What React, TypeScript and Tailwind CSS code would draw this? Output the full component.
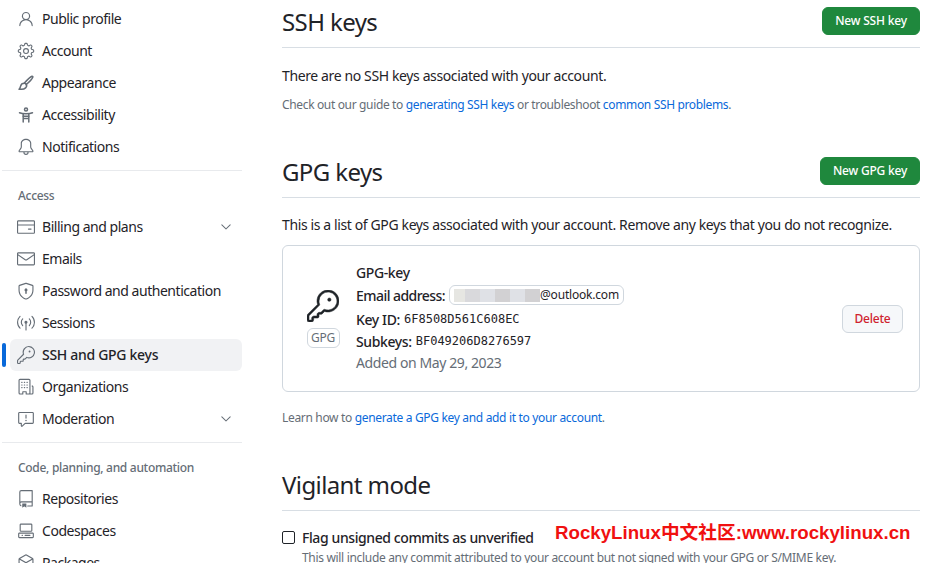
import {
  GoPerson, GoGear, GoBell, GoCreditCard, GoMail,
  GoShieldLock, GoBroadcast, GoKey, GoOrganization, GoReport, GoRepo, GoCodespaces,
  GoPackage, GoChevronDown,
} from "react-icons/go";

const font = "font-['Noto_Sans','Liberation_Sans',sans-serif]";

function BrushIcon({ className }: any) {
  return (
    <svg width={18} height={18} viewBox="-1 -1 18 18" fill="none" stroke="currentColor" strokeWidth="1.5" strokeLinejoin="round" strokeLinecap="round" className={className}>
      <path d="M6.4 8.1C8.6 5.6 12 2 14 1.3c.6-.2 1.1.3.8.9-.8 2-4.4 5.5-6.9 7.6" />
      <path d="M6.3 8.2c1.1 0 2.2.8 2.4 1.7.3 2-1.6 4.4-5 4.4H1c1.2-1 1.3-2 1.6-3.2.4-1.700 2-2.900 3.700-2.900z" />
    </svg>
  );
}

function AccessIcon({ className }: any) {
  return (
    <svg width={18} height={18} viewBox="-1 -1 18 18" fill="none" stroke="currentColor" strokeWidth="1.5" strokeLinecap="round" strokeLinejoin="round" className={className}>
      <circle cx="8" cy="2.500" r="1.500" />
      <path d="M1.500 5.800c2 .9 4.200 1 6.500 1s4.500-.1 6.500-1" />
      <path d="M5.200 6.800v2.400h5.600V6.800" />
      <path d="M5.200 9.200V15M10.800 9.200V15M5.200 11.500h5.600" />
    </svg>
  );
}

function NavItem({ icon: Icon, label, chevron, active }: any) {
  return (
    <div className={`relative flex h-8 items-center rounded-md pl-[7px] pr-2 text-[14px] text-[#1f2328] ${active ? "bg-[#f1f2f4] font-medium tracking-[-0.3px]" : "tracking-[-0.47px]"}`}>
      {active && <span className="absolute -left-2 top-1 h-6 w-1 rounded-md bg-[#0969da]" />}
      <Icon className="mr-[7px] shrink-0 text-[#656d76]" size={18} />
      <span className="flex-1 pb-[2px]">{label}</span>
      {chevron && <GoChevronDown className="text-[#656d76]" size={16} />}
    </div>
  );
}

function Heading({ title, button, width }: any) {
  return (
    <div className="flex h-[48px] items-center justify-between border-b border-[#d8dee4] pb-[5px]">
      <h2 className="mt-px text-[24px] leading-none tracking-[-0.6px] text-[#1f2328]">{title}</h2>
      {button && (
        <button className={`flex h-7 ${width} items-center justify-center rounded-md border border-[#1f883d] bg-[#1f883d] text-[12px] font-medium tracking-[-0.2px] text-white`}>
          {button}
        </button>
      )}
    </div>
  );
}

export default function App() {
  return (
    <div className={`relative flex h-[563px] w-[925px] overflow-hidden bg-white ${font}`}>
      {/* sidebar */}
      <div className="ml-[10px] w-[232px] shrink-0 pt-[3px]">
        <NavItem icon={GoPerson} label="Public profile" />
        <NavItem icon={GoGear} label="Account" />
        <NavItem icon={BrushIcon} label="Appearance" />
        <NavItem icon={AccessIcon} label="Accessibility" />
        <NavItem icon={GoBell} label="Notifications" />
        <div className="-ml-2 mb-[17px] mt-[7px] border-t border-[#e8eaed]" />
        <div className="mb-[7px] h-[16px] pl-2 text-[12px] font-medium leading-[16px] tracking-[-0.3px] text-[#656d76]">Access</div>
        <NavItem icon={GoCreditCard} label="Billing and plans" chevron />
        <NavItem icon={GoMail} label="Emails" />
        <NavItem icon={GoShieldLock} label="Password and authentication" />
        <NavItem icon={GoBroadcast} label="Sessions" />
        <NavItem icon={GoKey} label="SSH and GPG keys" active />
        <NavItem icon={GoOrganization} label="Organizations" />
        <NavItem icon={GoReport} label="Moderation" chevron />
        <div className="-ml-2 mb-[17px] mt-[7px] border-t border-[#e8eaed]" />
        <div className="mb-[7px] h-[16px] pl-2 text-[12px] font-medium leading-[16px] tracking-[-0.3px] text-[#656d76]">Code, planning, and automation</div>
        <NavItem icon={GoRepo} label="Repositories" />
        <NavItem icon={GoCodespaces} label="Codespaces" />
        <NavItem icon={GoPackage} label="Packages" />
      </div>

      {/* main */}
      <div className="ml-[40px] w-[638px] shrink-0 text-[14px] tracking-[-0.38px] text-[#1f2328]">
        <Heading title="SSH keys" button="New SSH key" width="w-[98px]" />
        <p className="mt-[18px] leading-[20px]">There are no SSH keys associated with your account.</p>
        <p className="mt-[9px] text-[12px] leading-[20px] tracking-[-0.35px] text-[#656d76]">
          Check out our guide to <span className="text-[#0969da]">generating SSH keys</span> or troubleshoot <span className="text-[#0969da]">common SSH problems</span>.
        </p>

        <div className="mt-[35px]">
          <Heading title="GPG keys" button="New GPG key" width="w-[100px]" />
        </div>
        <p className="mt-[17px] leading-[20px]">This is a list of GPG keys associated with your account. Remove any keys that you do not recognize.</p>

        <div className="mt-[10px] flex h-[147px] items-center rounded-md border border-[#d0d7de] pl-[15px] pr-[16px]">
          <div className="flex w-[50px] shrink-0 flex-col items-center">
            <GoKey size={32} stroke="currentColor" strokeWidth={0.4} className="text-[#1f2328]" />
            <span className="mt-[6px] flex h-[20px] w-[33px] items-center justify-center rounded-md border border-[#d0d7de] text-[12px] tracking-[-0.2px] text-[#656d76]">GPG</span>
          </div>
          <div className="flex-1 pb-px pl-[8px]">
            <div className="font-medium leading-[22px]">GPG-key</div>
            <div className="flex h-[22px] items-center font-medium tracking-[-0.55px]">
              Email address:
              <span className="ml-1 flex h-[20px] items-center rounded-md border border-[#d0d7de] pl-1 pr-1 text-[12px] font-normal tracking-[-0.2px]">
                <span className="h-[13px] w-[11px] bg-[#e6e6e2]" />
                <span className="h-[13px] w-[15px] bg-[#d9d9dc]" />
                <span className="h-[13px] w-[15px] bg-[#dfe1e6]" />
                <span className="h-[13px] w-[15px] bg-[#d2d1d3]" />
                <span className="h-[13px] w-[15px] bg-[#dfe1e6]" />
                <span className="h-[13px] w-[15px] bg-[#d2d1d3]" />
                @outlook.com
              </span>
            </div>
            <div className="mt-[2px] flex h-[22px] items-center font-medium">
              Key ID:
              <code className="ml-1 font-['DejaVu_Sans_Mono',monospace] text-[12px] font-normal tracking-normal">6F8508D561C608EC</code>
            </div>
            <div className="flex h-[22px] items-center font-medium">
              Subkeys:
              <code className="ml-1 font-['DejaVu_Sans_Mono',monospace] text-[12px] font-normal tracking-normal">BF049206D8276597</code>
            </div>
            <div className="leading-[22px] tracking-[-0.4px] text-[#656d76]">Added on May 29, 2023</div>
          </div>
          <button className="flex h-7 w-[61px] items-center justify-center rounded-md border border-[#d0d7de] bg-[#f6f8fa] text-[12px] font-medium tracking-[-0.2px] text-[#cf222e]">Delete</button>
        </div>

        <p className="mt-[16px] text-[12px] leading-[20px] tracking-[-0.33px] text-[#656d76]">
          Learn how to <span className="text-[#0969da]">generate a GPG key and add it to your account</span>.
        </p>

        <div className="mt-[35px]">
          <Heading title="Vigilant mode" />
        </div>
        <label className="mt-[16px] flex h-[20px] items-center font-medium tracking-[-0.4px]">
          <span className="mr-[7px] h-[13px] w-[13px] rounded-[2px] border border-[#1f2328] bg-white" />
          Flag unsigned commits as unverified
        </label>
        <p className="ml-[20px] mt-[1px] whitespace-nowrap text-[12px] leading-[20px] tracking-[-0.32px] text-[#656d76]">
          This will include any commit attributed to your account but not signed with your GPG or S/MIME key.
        </p>
      </div>

      {/* watermark */}
      <div className="absolute left-[555px] top-[522px] whitespace-nowrap font-['Liberation_Sans','Noto_Sans_CJK_SC',sans-serif] text-[18.7px] font-bold leading-[22px] text-[#f01010]">
        RockyLinux中文社区:www.rockylinux.cn
      </div>
    </div>
  );
}
